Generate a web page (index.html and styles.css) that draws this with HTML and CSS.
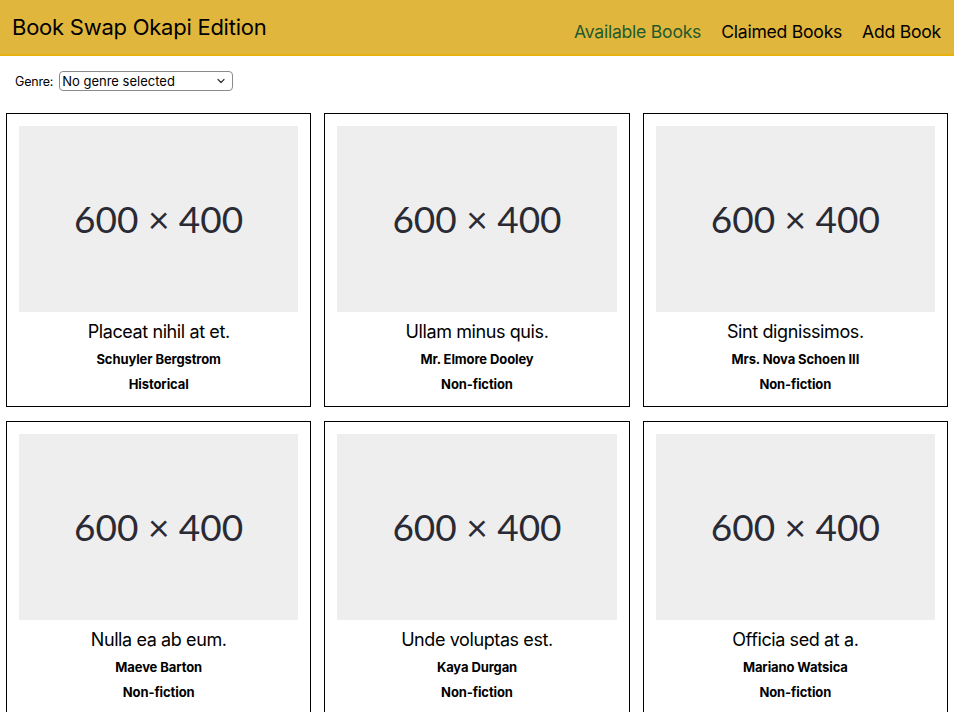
FILE: index.html
```html
<!DOCTYPE html>
<html lang="en">
<head>
<meta charset="utf-8">
<title>Book Swap Okapi Edition</title>
<link rel="stylesheet" href="styles.css">
</head>
<body>
<header class="topbar">
  <h1 class="brand">Book Swap Okapi Edition</h1>
  <nav class="nav">
    <a class="nav-link active" href="#">Available Books</a>
    <a class="nav-link" href="#">Claimed Books</a>
    <a class="nav-link" href="#">Add Book</a>
  </nav>
</header>
<div class="filter">
  <label class="filter-label" for="genre">Genre:</label>
  <span class="select-wrap">
    <select id="genre" class="select">
      <option>No genre selected</option>
      <option>Historical</option>
      <option>Non-fiction</option>
    </select>
    <svg class="chevron" width="8" height="6" viewBox="0 0 8 6"><path d="M1 1.5 L4 4.5 L7 1.5" fill="none" stroke="#333" stroke-width="1.2" stroke-linecap="round" stroke-linejoin="round"/></svg>
  </span>
</div>
<main class="grid">
  <article class="card">
    <div class="cover">600 × 400</div>
    <h2 class="title">Placeat nihil at et.</h2>
    <p class="meta">Schuyler Bergstrom</p>
    <p class="meta">Historical</p>
  </article>
  <article class="card">
    <div class="cover">600 × 400</div>
    <h2 class="title">Ullam minus quis.</h2>
    <p class="meta">Mr. Elmore Dooley</p>
    <p class="meta">Non-fiction</p>
  </article>
  <article class="card">
    <div class="cover">600 × 400</div>
    <h2 class="title">Sint dignissimos.</h2>
    <p class="meta">Mrs. Nova Schoen III</p>
    <p class="meta">Non-fiction</p>
  </article>
  <article class="card">
    <div class="cover">600 × 400</div>
    <h2 class="title">Nulla ea ab eum.</h2>
    <p class="meta">Maeve Barton</p>
    <p class="meta">Non-fiction</p>
  </article>
  <article class="card">
    <div class="cover">600 × 400</div>
    <h2 class="title">Unde voluptas est.</h2>
    <p class="meta">Kaya Durgan</p>
    <p class="meta">Non-fiction</p>
  </article>
  <article class="card">
    <div class="cover">600 × 400</div>
    <h2 class="title">Officia sed at a.</h2>
    <p class="meta">Mariano Watsica</p>
    <p class="meta">Non-fiction</p>
  </article>
</main>
</body>
</html>
```
FILE: styles.css
```css
html {
  scrollbar-width: none;
}
html::-webkit-scrollbar {
  display: none;
}
body {
  margin: 0;
  font-family: Inter, "Noto Sans", "Liberation Sans", sans-serif;
  color: #000;
  background: #fff;
}
.topbar {
  display: flex;
  align-items: center;
  justify-content: space-between;
  height: 54px;
  padding: 0 13px 0 12px;
  background: #e1b63d;
  border-bottom: 2px solid #e8b20f;
}
.brand {
  margin: 0;
  font-size: 22px;
  font-weight: 400;
  letter-spacing: -0.25px;
}
.nav {
  display: flex;
  gap: 20px;
  margin-top: 8px;
}
.nav-link {
  font-size: 17.6px;
  color: #000;
  text-decoration: none;
  letter-spacing: -0.25px;
}
.nav-link.active {
  color: #1e5a2c;
}
.filter {
  display: flex;
  align-items: center;
  gap: 6px;
  padding: 14px 15px 0;
  height: 22px;
}
.filter-label {
  font-size: 12.5px;
  letter-spacing: -0.2px;
}
.select-wrap {
  position: relative;
  display: inline-flex;
}
.select {
  appearance: none;
  -webkit-appearance: none;
  width: 174px;
  height: 20px;
  padding: 0 16px 0 2px;
  border: 1px solid #8a8a8a;
  border-radius: 4px;
  background: #fff;
  font-family: inherit;
  font-size: 13px;
  color: #000;
}
.chevron {
  position: absolute;
  right: 8px;
  top: 7px;
  pointer-events: none;
}
.grid {
  display: grid;
  grid-template-columns: repeat(3, 1fr);
  column-gap: 13px;
  row-gap: 14px;
  padding: 21px 6px 0;
}
.card {
  border: 1px solid #000;
  padding: 12px 12px 14px;
  text-align: center;
}
.cover {
  aspect-ratio: 3 / 2;
  display: flex;
  align-items: center;
  justify-content: center;
  padding-bottom: 2px;
  box-sizing: border-box;
  background: #eeeeee;
  color: #2a2a35;
  font-family: Lato, "Open Sans", sans-serif;
  font-size: 37px;
}
.title {
  margin: 9px 0 0;
  font-size: 18px;
  line-height: 22px;
  font-weight: 400;
  letter-spacing: -0.4px;
}
.meta {
  margin: 8px 0 0;
  font-size: 13px;
  line-height: 16px;
  font-weight: 700;
  letter-spacing: -0.1px;
}
.meta + .meta {
  margin-top: 9px;
}
```
